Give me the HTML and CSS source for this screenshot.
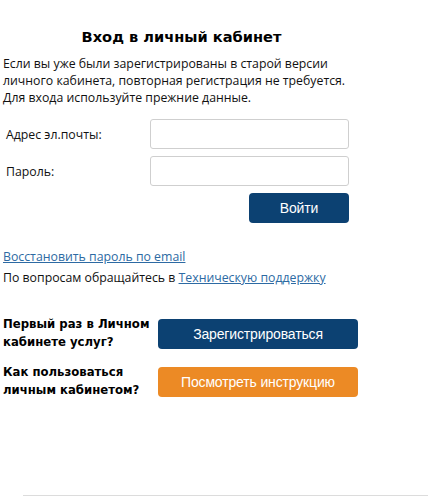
FILE: index.html
```html
<!DOCTYPE html>
<html lang="ru">
<head>
<meta charset="utf-8">
<title>Вход в личный кабинет</title>
<link rel="stylesheet" href="styles.css">
</head>
<body>
<div class="page">
  <h1 class="title">Вход в личный кабинет</h1>
  <p class="intro">Если вы уже были зарегистрированы в старой версии личного кабинета, повторная регистрация не требуется. Для входа используйте прежние данные.</p>
  <form class="login">
    <div class="field">
      <label class="field-label">Адрес эл.почты:</label>
      <input class="field-input" type="text">
    </div>
    <div class="field">
      <label class="field-label">Пароль:</label>
      <input class="field-input" type="password">
    </div>
    <div class="actions">
      <button type="button" class="btn btn-blue btn-login">Войти</button>
    </div>
  </form>
  <p class="recover"><a href="#" class="link">Восстановить пароль по email</a></p>
  <p class="support">По вопросам обращайтесь в <a href="#" class="link">Техническую поддержку</a></p>
  <div class="cta">
    <div class="cta-row">
      <div class="cta-label">Первый раз в Личном кабинете услуг?</div>
      <button type="button" class="btn btn-blue btn-wide">Зарегистрироваться</button>
    </div>
    <div class="cta-row">
      <div class="cta-label">Как пользоваться личным кабинетом?</div>
      <button type="button" class="btn btn-orange btn-wide">Посмотреть инструкцию</button>
    </div>
  </div>
</div>
<div class="footer-line"></div>
</body>
</html>
```

FILE: styles.css
```css
* { box-sizing: border-box; }
html, body { margin: 0; padding: 0; background: #fff; }
body {
  font-family: "Open Sans", "Liberation Sans", sans-serif;
  font-size: 12.3px;
  color: #111;
  height: 498px;
  overflow: hidden;
}
.page {
  width: 360px;
  padding: 27px 0 0 3px;
}
.title {
  margin: 0;
  font-family: "DejaVu Sans", sans-serif;
  font-weight: bold;
  font-size: 14.6px;
  line-height: 20px;
  text-align: center;
  color: #000;
}
.intro {
  margin: 8px 0 0;
  line-height: 17px;
}
.login {
  margin-top: 13px;
  display: flex;
  flex-direction: column;
  gap: 7px;
}
.field {
  display: flex;
  align-items: center;
}
.field-label {
  width: 147px;
  padding-left: 3px;
}
.field-input {
  width: 199px;
  height: 30px;
  border: 1px solid #cfcfcf;
  border-radius: 3px;
  background: #fff;
  margin: 0;
}
.actions {
  display: flex;
  justify-content: flex-end;
  width: 346px;
}
.btn {
  border: none;
  border-radius: 4px;
  color: #fff;
  font-family: "Liberation Sans", sans-serif;
  font-size: 14px;
  letter-spacing: -0.15px;
  height: 30px;
  padding: 0;
  margin: 0;
}
.btn-blue { background: #0c4172; }
.btn-orange { background: #ec8a25; }
.btn-login { width: 100px; }
.btn-wide { width: 200px; }
.recover {
  margin: 25px 0 0;
  line-height: 17px;
}
.support {
  margin: 4px 0 0;
  line-height: 17px;
}
.link {
  color: #2d6aa3;
  text-decoration: underline;
}
.cta {
  margin-top: 30px;
  display: flex;
  flex-direction: column;
  gap: 13px;
}
.cta-row {
  display: flex;
  align-items: center;
}
.cta-label {
  width: 155px;
  font-family: "DejaVu Sans", sans-serif;
  font-weight: bold;
  font-size: 11.7px;
  line-height: 17.5px;
  color: #000;
}
.footer-line {
  position: absolute;
  left: 23px;
  right: 0;
  top: 495px;
  height: 1px;
  background: #dcdcdc;
}
```
